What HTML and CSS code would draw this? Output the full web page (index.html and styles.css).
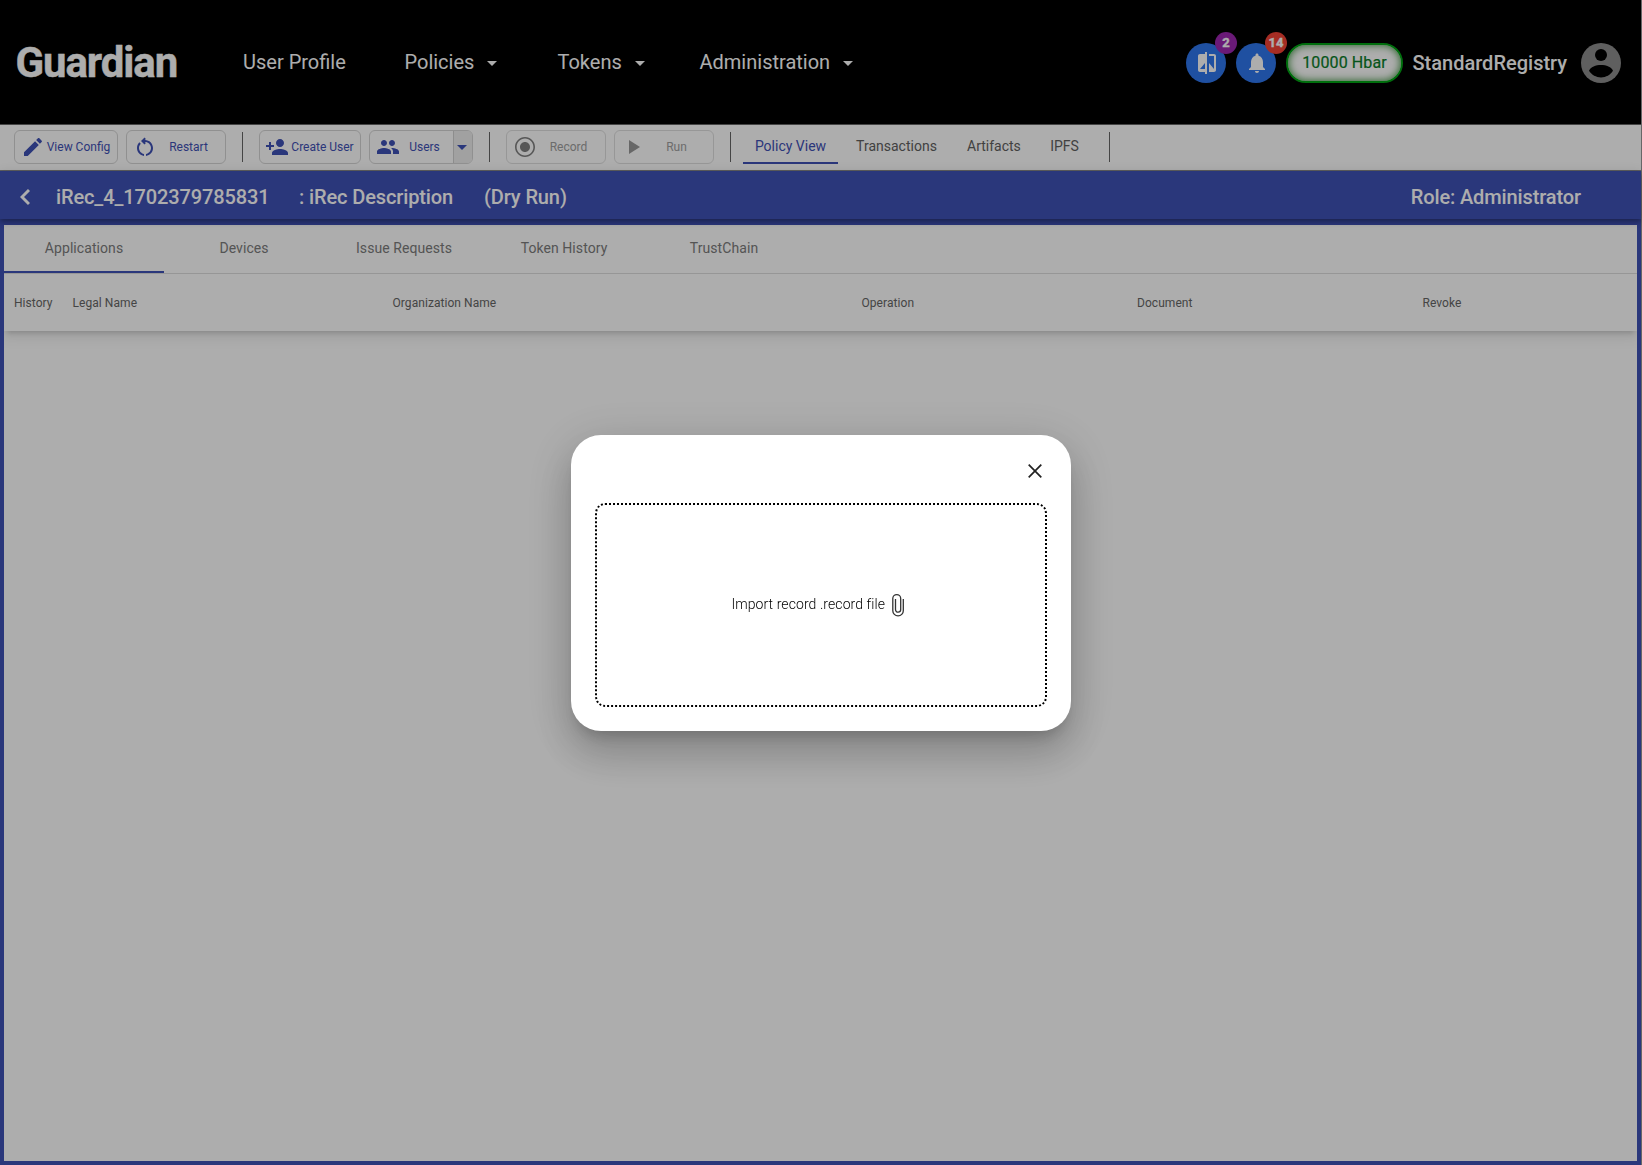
FILE: index.html
```html
<!DOCTYPE html>
<html lang="en">
<head>
<meta charset="utf-8">
<title>Guardian</title>
<link rel="stylesheet" href="styles.css">
</head>
<body>
<div class="page">
  <header class="topbar">
    <div class="brand">Guardian</div>
    <nav class="menu">
      <a class="m-profile">User Profile</a>
      <a class="m-policies">Policies<i class="caret"></i></a>
      <a class="m-tokens">Tokens<i class="caret"></i></a>
      <a class="m-admin">Administration<i class="caret"></i></a>
    </nav>
    <div class="account">
      <span class="round"><svg viewBox="0 0 24 24" width="24" height="24"><path d="M10 3H5c-1.100 0-2 .9-2 2v14c0 1.100.9 2 2 2h5v2h2V1h-2v2zm0 15H5l5-6v6zm9-15h-5v2h5v13l-5-6v9h5c1.100 0 2-.9 2-2V5c0-1.100-.9-2-2-2z"/></svg><b class="badge purple">2</b></span>
      <span class="round"><svg viewBox="0 0 24 24" width="24" height="24"><path d="M12 22c1.100 0 2-.9 2-2h-4c0 1.100.89 2 2 2zm6-6v-5c0-3.070-1.640-5.640-4.500-6.320V4c0-.83-.67-1.500-1.500-1.500s-1.500.67-1.500 1.500v.68C7.630 5.360 6 7.920 6 11v5l-2 2v1h16v-1l-2-2z"/></svg><b class="badge red">14</b></span>
      <span class="balance">10000 Hbar</span>
      <span class="username">StandardRegistry</span>
      <svg class="avatar" viewBox="0 0 40 40" width="40" height="40"><circle cx="20" cy="20" r="20" fill="#8c8c8c"/><circle cx="20" cy="12" r="6"/><path d="M8 27.800C9.300 23.800 15 22 20 22s10.700 1.800 12 5.800C29.300 32 25 34.400 20 34.400S10.700 32 8 27.800z"/></svg>
    </div>
  </header>

  <div class="toolbar">
    <button class="tool config"><svg viewBox="0 0 24 24" width="24" height="24"><path d="M3 17.250V21h3.750L17.810 9.940l-3.750-3.750L3 17.250zM20.710 7.040c.39-.39.39-1.020 0-1.410l-2.340-2.340c-.39-.39-1.020-.39-1.410 0l-1.830 1.830 3.750 3.750 1.830-1.830z"/></svg><span>View Config</span></button>
    <button class="tool wide"><svg viewBox="0 0 24 24" width="24" height="24"><path d="M6 13c0-1.650.67-3.150 1.760-4.240L6.340 7.340C4.900 8.790 4 10.790 4 13c0 4.080 3.050 7.440 7 7.930v-2.020c-2.830-.48-5-2.940-5-5.910zm14 0c0-4.420-3.580-8-8-8-.06 0-.12.010-.18.010l1.090-1.090L11.500 2.500 8 6l3.500 3.500 1.410-1.410-1.080-1.080c.06 0 .12-.01.17-.01 3.310 0 6 2.690 6 6 0 2.970-2.170 5.430-5 5.910v2.020c3.950-.49 7-3.850 7-7.930z"/></svg><span>Restart</span></button>
    <i class="divider"></i>
    <button class="tool create"><svg viewBox="0 0 24 24" width="24" height="24"><path d="M15 12c2.210 0 4-1.790 4-4s-1.790-4-4-4-4 1.790-4 4 1.790 4 4 4zm-9-2V7H4v3H1v2h3v3h2v-3h3v-2H6zm9 4c-2.670 0-8 1.340-8 4v2h16v-2c0-2.660-5.330-4-8-4z"/></svg><span>Create User</span></button>
    <button class="tool users"><svg viewBox="0 0 24 24" width="24" height="24"><path d="M16 11c1.660 0 2.990-1.340 2.990-3S17.660 5 16 5c-1.660 0-3 1.340-3 3s1.340 3 3 3zm-8 0c1.660 0 2.990-1.340 2.990-3S9.660 5 8 5C6.340 5 5 6.340 5 8s1.340 3 3 3zm0 2c-2.330 0-7 1.170-7 3.500V19h14v-2.500c0-2.330-4.670-3.500-7-3.500zm8 0c-.29 0-.62.020-.97.050 1.160.84 1.970 1.970 1.970 3.450V19h6v-2.500c0-2.330-4.670-3.500-7-3.500z"/></svg><span>Users</span><i class="drop"></i></button>
    <i class="divider"></i>
    <button class="tool wide off"><svg viewBox="0 0 24 24" width="24" height="24"><path d="M12 7c-2.760 0-5 2.240-5 5s2.240 5 5 5 5-2.240 5-5-2.240-5-5-5zm0-5C6.480 2 2 6.480 2 12s4.480 10 10 10 10-4.480 10-10S17.520 2 12 2zm0 18.400c-4.640 0-8.400-3.760-8.400-8.400S7.360 3.600 12 3.600s8.400 3.760 8.400 8.400-3.760 8.400-8.400 8.400z"/></svg><span>Record</span></button>
    <button class="tool wide off run"><svg viewBox="0 0 24 24" width="24" height="24"><path d="M8 5v14l11-7z"/></svg><span>Run</span></button>
    <i class="divider"></i>
    <nav class="views">
      <a class="on">Policy View</a><a>Transactions</a><a>Artifacts</a><a>IPFS</a>
    </nav>
    <i class="divider end"></i>
  </div>

  <div class="policybar">
    <svg viewBox="0 0 10 16" width="10" height="16"><path d="M9 1 2 8l7 7" fill="none" stroke="#fff" stroke-width="2.900"/></svg>
    <span class="p-name">iRec_4_1702379785831</span>
    <span class="p-desc">: iRec Description</span>
    <span>(Dry Run)</span>
    <span class="p-role">Role: Administrator</span>
  </div>

  <main class="content">
    <nav class="tabs">
      <a class="on">Applications</a><a>Devices</a><a>Issue Requests</a><a>Token History</a><a>TrustChain</a>
    </nav>
    <div class="columns">
      <span>History</span><span>Legal Name</span><span>Organization Name</span><span>Operation</span><span>Document</span><span>Revoke</span>
    </div>
  </main>
</div>

<div class="overlay">
  <section class="dialog">
    <svg class="close" viewBox="0 0 14 14" width="14" height="14"><path d="M.7.700l12.600 12.600M13.300.700L.7 13.300"/></svg>
    <div class="dropzone">
      <span>Import record .record file</span>
      <svg viewBox="0 0 12 23" width="12" height="23"><path d="M11.300 5v11.700a5.250 5.250 0 0 1-10.500 0V4.600a3.900 3.900 0 0 1 7.900 0v11a2.500 2.500 0 0 1-5.200 0V5"/></svg>
    </div>
  </section>
</div>
</body>
</html>
```
FILE: styles.css
```css
* { box-sizing: border-box; }
body { margin: 0; background: #999; font-family: Roboto, sans-serif; height: 1165px; overflow: hidden; }
svg { display: block; flex: none; }
.page { width: 1641px; height: 1165px; display: flex; flex-direction: column; background: #fff; }

.topbar { height: 125px; flex: none; background: #000; border-bottom: 1px solid #666; display: flex; align-items: center; padding: 0 20px 0 15.5px; color: #fff; }
.brand { width: 227.5px; font-size: 42px; font-weight: 700; letter-spacing: -1.1px; -webkit-text-stroke: .4px #fff; }
.menu { display: flex; font-size: 20px; }
.menu a { display: flex; align-items: center; white-space: nowrap; }
.m-profile { width: 161.5px; }
.m-policies { width: 153px; }
.m-tokens { width: 142px; }
.caret { border: 5px solid transparent; border-top-color: #fff; border-bottom: 0; margin: 3px 0 0 13px; }
.account { margin-left: auto; padding-top: 2px; display: flex; align-items: center; gap: 10px; }
.round { position: relative; width: 40px; height: 40px; border-radius: 50%; background: #2f76ee; display: flex; align-items: center; justify-content: center; }
.round svg { fill: #fff; }
.round svg { margin-left: 1px; }
.badge { position: absolute; left: 29px; top: -11px; width: 22px; height: 22px; border-radius: 50%; font-size: 13px; font-weight: 700; line-height: 22px; text-align: center; -webkit-text-stroke: .4px #fff; }
.purple { background: #9c27b0; }
.red { background: #f44336; }
.balance { width: 117px; height: 40px; border: 2px solid #00a414; border-radius: 20px; background: #fff; box-shadow: inset 0 0 8px #2b852b; color: #0a7d28; font-size: 16px; font-weight: 400; letter-spacing: .1px; line-height: 35px; text-align: center; -webkit-text-stroke: .2px #0a7d28; }
.username { font-size: 20px; font-weight: 500; width: 158px; margin-left: -.5px; margin-right: .5px; }

.toolbar { height: 46px; flex: none; border-bottom: 1px solid #8c8c8c; display: flex; padding: 5px 0 0 14px; }
.tool { position: relative; height: 34px; margin: 0 8px 0 0; padding: 0 6px; border: 1px solid #d5d5d5; border-radius: 6px; background: transparent; color: #3f51b5; font: 400 12px Roboto, sans-serif; display: flex; align-items: center; }
.tool svg { fill: #3f51b5; }
.tool span { flex: 1; text-align: center; white-space: nowrap; }
.config { width: 104px; }
.config span, .create span { padding-left: 1px; }
.wide { width: 100px; }
.wide span { padding-left: 1px; }
.create { width: 102px; }
.create svg { margin-left: -1px; margin-right: 1px; }
.users { width: 104px; padding-right: 0; overflow: hidden; }
.users span { padding-right: 4px; }
.drop { width: 19px; align-self: stretch; background: #ededed; border-left: 1px solid #d0d0d0; display: flex; align-items: center; padding-left: 3px; }
.drop::before { content: ""; border: 5.5px solid transparent; border-top-color: #3f51b5; border-bottom: 0; }
.off { color: #a0a0a0; border-color: #dfdfdf; }
.off svg { fill: #808080; }
.run svg { fill: #999; }
.divider { width: 1px; height: 30px; background: #666; margin: 2px 16px 0 8px; }
.views { display: flex; font-size: 14px; color: #616161; margin-left: -4px; }
.views a { height: 34px; line-height: 33px; width: 95px; margin-right: 18px; text-align: center; }
.views .on { color: #3f51b5; border-bottom: 2px solid #3f51b5; }
.views a:nth-child(2) { width: 81px; margin-right: 30px; }
.views a:nth-child(3) { width: 53px; margin-right: 30px; }
.views a:nth-child(4) { width: 29px; margin-right: 22px; }

.policybar { position: relative; height: 48px; flex: none; background: #3f51b5; color: #fff; display: flex; align-items: center; padding: 4px 60px 0 20px; font-size: 20px; font-weight: 500; letter-spacing: -.12px; box-shadow: 0 2px 4px -1px rgba(0,0,0,.2), 0 4px 5px rgba(0,0,0,.14), 0 1px 10px rgba(0,0,0,.12); }
.p-name { margin-left: 26px; width: 243px; }
.p-desc { width: 185px; }
.p-role { margin-left: auto; }

.content { flex: 1; border: 4px solid #3f51b5; border-top-width: 6px; }
.tabs { height: 49px; display: flex; border-bottom: 1px solid #dedede; font-size: 14px; letter-spacing: .07px; }
.tabs a { width: 160px; height: 48px; text-align: center; line-height: 47px; color: #7c7c7c; }
.tabs .on { border-bottom: 2px solid #3f51b5; }
.columns { height: 57px; display: grid; grid-template-columns: 58.5px 320px 469px 275.5px 285.5px 1fr; align-items: center; padding-left: 10px; padding-top: 1px; font-size: 12px; letter-spacing: .06px; color: #666; box-shadow: 0 5px 5px -3px rgba(0,0,0,.15), 0 3px 14px 2px rgba(0,0,0,.1); clip-path: inset(0 0 -30px 0); }

.overlay { position: fixed; inset: 0; background: rgba(0,0,0,.32); display: flex; align-items: center; justify-content: center; }
.dialog { width: 500px; height: 296px; padding: 29px 24px 24px; border-radius: 30px; background: #fff; display: flex; flex-direction: column; box-shadow: 0 11px 15px -7px rgba(0,0,0,.2), 0 24px 38px 3px rgba(0,0,0,.14), 0 9px 46px 8px rgba(0,0,0,.12); }
.close { align-self: flex-end; margin-right: 5.5px; stroke: #222; stroke-width: 1.700; }
.dropzone { margin-top: 25px; height: 204px; border: 2px dotted #000; border-radius: 10px; display: flex; align-items: center; justify-content: center; gap: 6.5px; font-size: 14px; font-weight: 300; letter-spacing: .08px; color: #000; padding-right: 7px; }
.dropzone span { padding-bottom: 2px; }
.dropzone svg { margin-top: 1px; fill: none; stroke: #333; stroke-width: 1.300; }
```
